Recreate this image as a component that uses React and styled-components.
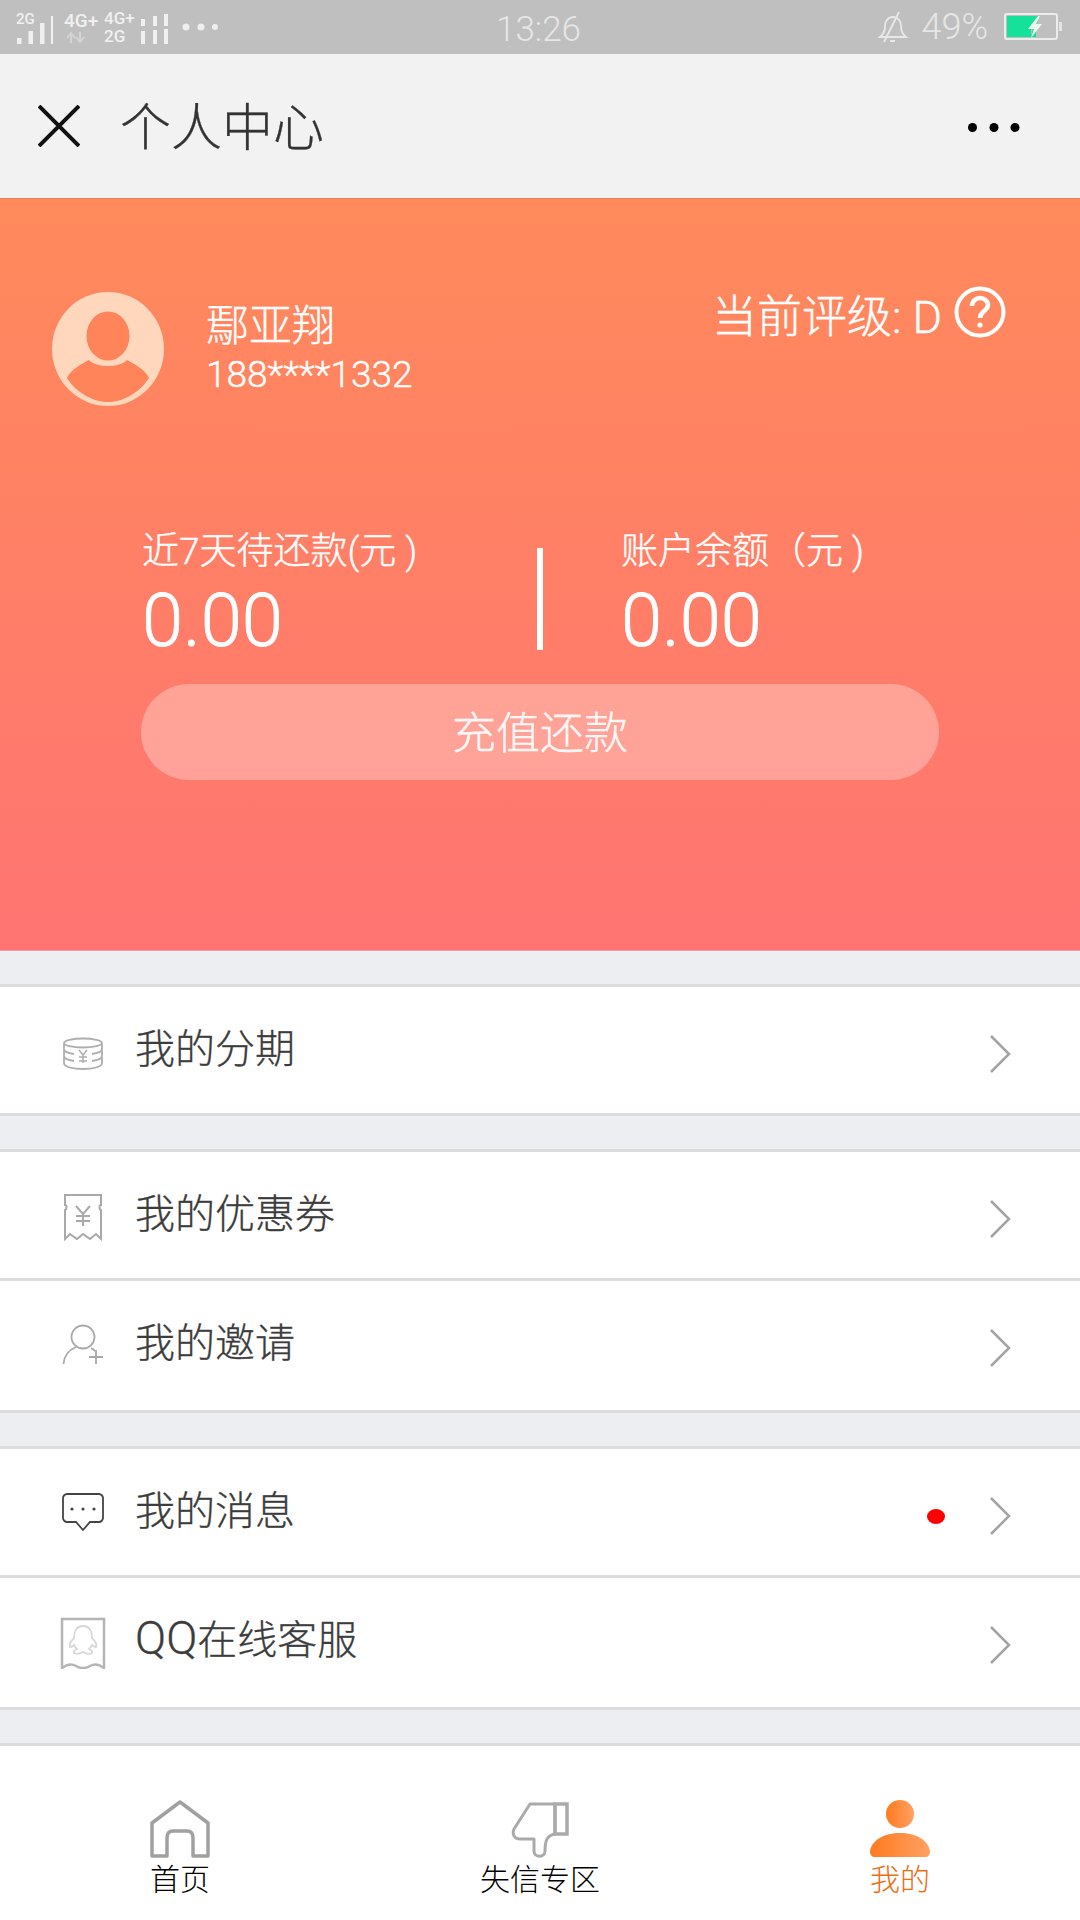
import React from 'react';
import styled, { createGlobalStyle } from 'styled-components';

const GlobalStyle = createGlobalStyle`
	html, body {
		margin: 0;
		padding: 0;
		background: #eceef1;
	}
	* {
		box-sizing: border-box;
	}
	body {
		font-family: Roboto, "Noto Sans CJK SC", sans-serif;
	}
`;

const Page = styled.div`
	width: 1080px;
	height: 1920px;
	overflow: hidden;
	display: flex;
	flex-direction: column;
`;

const StatusBar = styled.div`
	height: 54px;
	background: #bfbfbf;
	color: #e8e8e8;
	display: grid;
	grid-template-columns: 1fr auto 1fr;
	align-items: center;
	padding: 0 18px 0 15px;
`;

const StatusLeft = styled.div`
	display: flex;
	align-items: center;
`;

const StatusRight = styled.div`
	display: flex;
	align-items: center;
	justify-content: flex-end;
`;

const Clock = styled.span`
	font-size: 35px;
	font-weight: 300;
	color: #e6e6e6;
	position: relative;
	top: 2px;
`;

const Percent = styled.span`
	font-size: 36px;
	font-weight: 300;
	margin: 0 16px 0 13px;
	color: #e6e6e6;
`;

const SignalGroup = styled.div`
	position: relative;
	display: flex;
	align-items: flex-end;
	height: 34px;
	width: ${p => p.$width}px;
	margin-right: ${p => p.$gap}px;
`;

const NetLabel = styled.span`
	position: absolute;
	left: ${p => p.$left || 0}px;
	top: ${p => p.$top || 0}px;
	font-size: ${p => p.$size || 15}px;
	line-height: 1;
	font-weight: 500;
	color: #f0f0f0;
`;

const Nav = styled.div`
	height: 144px;
	background: #f2f2f3;
	display: flex;
	align-items: center;
	padding: 0 60px 0 38px;
`;

const NavTitle = styled.h1`
	margin: 0 0 4px 40px;
	flex: 1;
	font-size: 51px;
	font-weight: 300;
	color: #333;
	-webkit-text-stroke: .3px #333;
`;

const MoreWrap = styled.div`
	display: flex;
	margin-top: 2px;
`;

const Hero = styled.section`
	height: 753px;
	border-top: 1px solid #e97f55;
	border-bottom: 1px solid #e9a0a0;
	background: linear-gradient(180deg, #ff8a5b 0%, #ff7472 100%);
	color: #fff;
	padding-top: 93px;
	-webkit-text-stroke: .4px currentColor;
`;

const ProfileRow = styled.div`
	display: flex;
	justify-content: space-between;
	align-items: flex-start;
	padding: 0 74px 0 52px;
`;

const Profile = styled.div`
	display: flex;
	align-items: center;
	gap: 42px;
`;

const ProfileText = styled.div`
	display: flex;
	flex-direction: column;
	font-weight: 300;
`;

const UserName = styled.div`
	font-size: 43px;
	line-height: 50px;
`;

const Phone = styled.div`
	font-size: 37px;
	line-height: 44px;
	margin-top: 2px;
`;

const Rating = styled.div`
	display: flex;
	align-items: center;
	gap: 12px;
	font-size: 45px;
	font-weight: 300;
	margin-top: -15px;
`;

const RatingText = styled.span`
	margin-top: 4px;
`;

const Stats = styled.div`
	display: grid;
	grid-template-columns: 395px 6px 1fr;
	padding-left: 142px;
	margin-top: 118px;
`;

const Stat = styled.div`
	display: flex;
	flex-direction: column;
	margin-left: ${p => p.$offset || 0}px;
`;

const StatLabel = styled.div`
	font-size: 37px;
	line-height: 56px;
	font-weight: 300;
`;

const StatValue = styled.div`
	font-size: 74px;
	line-height: 78px;
	margin-top: 2px;
	font-weight: 300;
	-webkit-text-stroke: .8px currentColor;
`;

const StatDivider = styled.div`
	width: 6px;
	height: 102px;
	margin-top: 24px;
	background: #fff;
`;

const RechargeButton = styled.button`
	display: block;
	width: 798px;
	height: 96px;
	margin: 24px 0 0 141px;
	padding: 0 0 4px;
	border: 0;
	border-radius: 48px;
	background: rgba(255, 255, 255, .3);
	color: rgba(255, 255, 255, .92);
	font-family: inherit;
	font-size: 44px;
	font-weight: 300;
`;

const Group = styled.div`
	margin-top: 33px;
	background: #fff;
	border-top: 3px solid #dcdcdc;
`;

const Row = styled.div`
	height: ${p => (p.$tall ? 132 : 129)}px;
	padding: 0 69px ${p => (p.$tall ? 3 : 0)}px 60px;
	display: flex;
	align-items: center;
	border-bottom: 3px solid #dcdcdc;
`;

const IconSlot = styled.div`
	width: 46px;
	display: flex;
	justify-content: center;
	transform: translateY(${p => p.$shift || 0}px);
`;

const RowLabel = styled.div`
	flex: 1;
	margin-left: 29px;
	font-size: 40px;
	font-weight: 300;
	color: #3c3c3c;
	-webkit-text-stroke: .3px #3c3c3c;
	transform: translateY(-4px);
`;

const LatinPart = styled.span`
	font-size: 46px;
	line-height: 40px;
`;

const Dot = styled.span`
	width: 18px;
	height: 15px;
	margin-right: 44px;
	border-radius: 50%;
	background: #f00;
	transform: translateY(4px);
`;

const Chevron = styled.svg`
	width: 22px;
	height: 38px;
	transform: translateY(4px);
`;

const TabBar = styled.nav`
	flex: 1;
	background: #fff;
	border-top: 3px solid #dcdcdc;
	margin-top: 33px;
	display: grid;
	grid-template-columns: repeat(3, 1fr);
	padding-top: 52px;
`;

const Tab = styled.div`
	display: flex;
	flex-direction: column;
	align-items: center;
	color: ${p => (p.$active ? '#ee6c12' : '#000')};
`;

const TabIcon = styled.div`
	height: 60px;
	display: flex;
	align-items: flex-end;
`;

const TabLabel = styled.div`
	font-size: 30px;
	line-height: 36px;
	margin-top: 4px;
	font-weight: 300;
`;

function SignalIcons() {
	return (
		<StatusLeft>
			<SignalGroup $width={38} $gap={11}>
				<NetLabel $left={1} $top={2}>2G</NetLabel>
				<svg width="38" height="29" viewBox="0 0 38 29">
					<rect x="2" y="23" width="4.500" height="6" fill="#f0f0f0" />
					<rect x="13.500" y="16" width="4.500" height="13" fill="#f0f0f0" />
					<rect x="25" y="8" width="4.500" height="21" fill="#f0f0f0" />
					<rect x="36" y="1" width="2" height="28" fill="#f0f0f0" />
				</svg>
			</SignalGroup>
			<SignalGroup $width={35} $gap={5}>
				<NetLabel $left={0} $top={1} $size={19}>4G+</NetLabel>
				<svg width="32" height="13" viewBox="0 0 32 13">
					<path d="M7 12V3M3 7l4-5 4 5M16 1v9M12 6l4 5 4-5" fill="none" stroke="#d4d4d4" strokeWidth="2" />
				</svg>
			</SignalGroup>
			<SignalGroup $width={66} $gap={12}>
				<NetLabel $left={0} $top={0} $size={17}>4G+</NetLabel>
				<NetLabel $left={0} $top={18} $size={17}>2G</NetLabel>
				<svg width="66" height="30" viewBox="0 0 66 30">
					<rect x="37" y="5" width="4" height="7" fill="#f0f0f0" />
					<rect x="49" y="2" width="4" height="10" fill="#f0f0f0" />
					<rect x="60" y="-1" width="4" height="13" fill="#f0f0f0" />
					<rect x="37" y="17" width="4" height="13" fill="#f0f0f0" />
					<rect x="49" y="16" width="4" height="14" fill="#f0f0f0" />
					<rect x="60" y="15" width="4" height="15" fill="#f0f0f0" />
				</svg>
			</SignalGroup>
			<svg width="36" height="8" viewBox="0 0 36 8">
				<circle cx="4" cy="4" r="3.500" fill="#eee" />
				<circle cx="19" cy="4" r="3.500" fill="#eee" />
				<circle cx="33" cy="4" r="3" fill="#eee" />
			</svg>
		</StatusLeft>
	);
}

function BellOff() {
	return (
		<svg width="30" height="32" viewBox="0 0 30 32" fill="none" stroke="#e8e8e8" strokeWidth="1.8">
			<path d="M2 26c4-3 5-6 5-11 0-5 3-9 8-9s8 4 8 9c0 5 1 8 5 11H2z" />
			<path d="M21 1L6 31M12 30h5" />
		</svg>
	);
}

function Battery() {
	return (
		<svg width="58" height="28" viewBox="0 0 58 28">
			<rect x="1" y="1" width="52" height="25" rx="2" fill="none" stroke="#ececec" strokeWidth="2" />
			<rect x="3" y="3" width="24" height="21" fill="#14e29a" />
			<path d="M27 3h8l-3 11-5 1zM27 24l2-9 3-1v10z" fill="#14e29a" />
			<path d="M34 3l-10 13h6l-3 9 11-14h-6l4-8z" fill="#eef6f2" />
			<rect x="55" y="9" width="3" height="9" fill="#e4e4e4" />
		</svg>
	);
}

function CloseIcon() {
	return (
		<svg width="42" height="42" viewBox="0 0 42 42" stroke="#111" strokeWidth="4">
			<path d="M1 1l40 40M41 1L1 41" />
		</svg>
	);
}

function MoreIcon() {
	return (
		<svg width="52" height="9" viewBox="0 0 52 9" fill="#000">
			<circle cx="4.500" cy="4.500" r="4.500" />
			<circle cx="26" cy="4.500" r="4.500" />
			<circle cx="47" cy="4.500" r="4.500" />
		</svg>
	);
}

function Avatar() {
	return (
		<svg width="112" height="114" viewBox="0 0 112 114">
			<ellipse cx="56" cy="57" rx="56" ry="57" fill="#ffd7bd" />
			<path d="M15 86C19 77 30 72 37 68 45 76 67 76 75 68 82 72 93 77 97 86 88 100 72 110 56 110 40 110 24 100 15 86z" fill="#ff8459" />
			<ellipse cx="56" cy="44" rx="24" ry="28" fill="#ffd7bd" />
			<ellipse cx="56" cy="44" rx="21.500" ry="24.500" fill="#ff8459" />
		</svg>
	);
}

function QuestionIcon() {
	return (
		<svg width="52" height="52" viewBox="0 0 52 52" fill="none" stroke="#fff" strokeWidth="4">
			<circle cx="26" cy="26" r="23.500" />
			<path d="M18 20c0-5 4-8 8-8s8 3 8 7c0 6-8 6-8 13" strokeWidth="4.500" />
			<circle cx="26" cy="39" r="2.600" fill="#fff" stroke="none" />
		</svg>
	);
}

function CoinsIcon() {
	return (
		<svg width="42" height="34" viewBox="0 0 42 34" fill="none" stroke="#aeaeae" strokeWidth="1.800">
			<ellipse cx="21" cy="6" rx="19" ry="4.500" />
			<path d="M2 7v5c0 3 4 4 10 5M40 7v5c0 3-4 4-10 5M2 13v6c0 3 4 4 10 5M40 13v6c0 3-4 4-10 5M2 20v6c0 4 9 6 19 6s19-2 19-6v-6" />
			<path d="M17 13l4 5 4-5M21 18v8M17 20h8M17 24h8" strokeWidth="1.500" />
		</svg>
	);
}

function CouponIcon() {
	return (
		<svg width="40" height="48" viewBox="0 0 40 48" fill="none" stroke="#a9a9a9" strokeWidth="2">
			<path d="M2 2h36v10c-2 0-2 4 0 5v29l-5-5-6 5-7-5-6 5-7-5-5 5V17c2-1 2-5 0-5V2z" />
			<path d="M13 13l7 8 7-8M20 21v12M13 23h14M13 28h14" />
		</svg>
	);
}

function InviteIcon() {
	return (
		<svg width="42" height="42" viewBox="0 0 42 42" fill="none" stroke="#a9a9a9" strokeWidth="1.800">
			<circle cx="21" cy="13" r="11.500" />
			<path d="M14 23C7 26 2 32 1.500 40M29 24c2 1 3 2 4 3M27 33h14M34 26v14" />
		</svg>
	);
}

function MessageIcon() {
	return (
		<svg width="42" height="39" viewBox="0 0 42 39" fill="none" stroke="#444" strokeWidth="1.800">
			<path d="M5 1h32c2 0 4 2 4 4v20c0 2-2 4-4 4H28l-7 8-7-8H5c-2 0-4-2-4-4V5c0-2 2-4 4-4z" />
			<circle cx="10" cy="16" r="1.600" fill="#444" stroke="none" />
			<circle cx="21" cy="16" r="1.600" fill="#444" stroke="none" />
			<circle cx="32" cy="16" r="1.600" fill="#444" stroke="none" />
		</svg>
	);
}

function QQIcon() {
	return (
		<svg width="46" height="52" viewBox="0 0 46 52" fill="none">
			<path d="M2 2h42v49c-5-4-9-5-14-2-5 3-9 3-14 0-5-3-9-2-14 2V2z" stroke="#b5b5b5" strokeWidth="2.500" />
			<path d="M23 9c-7 0-9 6-9 12-3 3-5 7-4 9 2 0 3-1 4-2 1 2 2 3 3 4-2 1-4 2-3 4 2 1 6 1 9-1 3 2 7 2 9 1 1-2-1-3-3-4 1-1 2-2 3-4 1 1 2 2 4 2 1-2-1-6-4-9 0-6-2-12-9-12z" stroke="#d8d8d8" strokeWidth="1.800" />
		</svg>
	);
}

function HomeIcon() {
	return (
		<svg width="60" height="58" viewBox="0 0 60 58" fill="none" stroke="#a0a0a0" strokeWidth="3.500">
			<path d="M2 56V23L30 2l28 21v33H43V38c0-5-2-7-6-7H23c-4 0-6 2-6 7v18H2z" strokeLinejoin="round" />
		</svg>
	);
}

function ThumbDownIcon() {
	return (
		<svg width="58" height="56" viewBox="0 0 58 56" fill="none" stroke="#aaa" strokeWidth="3">
			<path d="M44 2H19L3 27c-2 5 0 10 6 10h14v12c0 7 11 7 11 0 0-10 2-16 10-17V2z" strokeLinejoin="round" />
			<path d="M44 2h12v30H44z" strokeWidth="3.500" />
		</svg>
	);
}

function PersonIcon() {
	return (
		<svg width="60" height="58" viewBox="0 0 60 58">
			<defs>
				<linearGradient id="personFill" x1="0" y1="0" x2="1" y2="0">
					<stop offset="0" stopColor="#ff7a1f" />
					<stop offset="1" stopColor="#ffa163" />
				</linearGradient>
			</defs>
			<circle cx="30" cy="14" r="14" fill="url(#personFill)" />
			<path d="M0 51C2 40 14 33 30 33s28 7 30 18c0 4-2 6-5 6H5c-3 0-5-2-5-6z" fill="url(#personFill)" />
		</svg>
	);
}

const sections = [
	{ rows: [{ label: '我的分期', icon: <CoinsIcon />, shift: 4 }] },
	{
		rows: [
			{ label: '我的优惠券', icon: <CouponIcon />, shift: 2 },
			{ label: '我的邀请', icon: <InviteIcon />, tall: true, shift: 1 },
		],
	},
	{
		rows: [
			{ label: '我的消息', icon: <MessageIcon />, dot: true, shift: 0 },
			{ label: <><LatinPart>QQ</LatinPart>在线客服</>, icon: <QQIcon />, tall: true, shift: 2 },
		],
	},
];

function App() {
	return (
		<Page>
			<GlobalStyle />
			<StatusBar>
				<SignalIcons />
				<Clock>13:26</Clock>
				<StatusRight>
					<BellOff />
					<Percent>49%</Percent>
					<Battery />
				</StatusRight>
			</StatusBar>

			<Nav>
				<CloseIcon />
				<NavTitle>个人中心</NavTitle>
				<MoreWrap><MoreIcon /></MoreWrap>
			</Nav>

			<Hero>
				<ProfileRow>
					<Profile>
						<Avatar />
						<ProfileText>
							<UserName>鄢亚翔</UserName>
							<Phone>188****1332</Phone>
						</ProfileText>
					</Profile>
					<Rating>
						<RatingText>当前评级: D</RatingText>
						<QuestionIcon />
					</Rating>
				</ProfileRow>

				<Stats>
					<Stat>
						<StatLabel>近7天待还款(元 )</StatLabel>
						<StatValue>0.00</StatValue>
					</Stat>
					<StatDivider />
					<Stat $offset={78}>
						<StatLabel>账户余额（元 )</StatLabel>
						<StatValue>0.00</StatValue>
					</Stat>
				</Stats>

				<RechargeButton>充值还款</RechargeButton>
			</Hero>

			{sections.map((section, i) => (
				<Group key={i}>
					{section.rows.map((row, j) => (
						<Row key={j} $tall={row.tall}>
							<IconSlot $shift={row.shift}>{row.icon}</IconSlot>
							<RowLabel>{row.label}</RowLabel>
							{row.dot && <Dot />}
							<Chevron viewBox="0 0 22 38" fill="none" stroke="#a3a3a3" strokeWidth="2.500">
								<path d="M2 1l18 18L2 37" />
							</Chevron>
						</Row>
					))}
				</Group>
			))}

			<TabBar>
				<Tab>
					<TabIcon><HomeIcon /></TabIcon>
					<TabLabel>首页</TabLabel>
				</Tab>
				<Tab>
					<TabIcon><ThumbDownIcon /></TabIcon>
					<TabLabel>失信专区</TabLabel>
				</Tab>
				<Tab $active>
					<TabIcon><PersonIcon /></TabIcon>
					<TabLabel>我的</TabLabel>
				</Tab>
			</TabBar>
		</Page>
	);
}

export default App;
